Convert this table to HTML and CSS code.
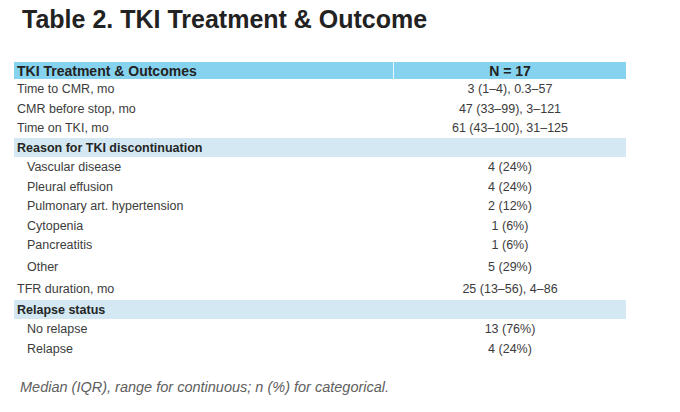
FILE: index.html
```html
<!DOCTYPE html>
<html>
<head>
<meta charset="utf-8">
<link rel="stylesheet" href="styles.css">
</head>
<body>
<h1 class="title">Table 2. TKI Treatment &amp; Outcome</h1>
<div class="tbl">
  <div class="row head"><div class="label">TKI Treatment &amp; Outcomes</div><div class="value">N = 17</div></div>
  <div class="row"><div class="label">Time to CMR, mo</div><div class="value">3 (1–4), 0.3–57</div></div>
  <div class="row"><div class="label">CMR before stop, mo</div><div class="value">47 (33–99), 3–121</div></div>
  <div class="row"><div class="label">Time on TKI, mo</div><div class="value">61 (43–100), 31–125</div></div>
  <div class="row section"><div class="label">Reason for TKI discontinuation</div><div class="value"></div></div>
  <div class="row sub"><div class="label">Vascular disease</div><div class="value">4 (24%)</div></div>
  <div class="row sub"><div class="label">Pleural effusion</div><div class="value">4 (24%)</div></div>
  <div class="row sub"><div class="label">Pulmonary art. hypertension</div><div class="value">2 (12%)</div></div>
  <div class="row sub"><div class="label">Cytopenia</div><div class="value">1 (6%)</div></div>
  <div class="row sub"><div class="label">Pancreatitis</div><div class="value">1 (6%)</div></div>
  <div class="row sub tall"><div class="label">Other</div><div class="value">5 (29%)</div></div>
  <div class="row mid"><div class="label">TFR duration, mo</div><div class="value">25 (13–56), 4–86</div></div>
  <div class="row section"><div class="label">Relapse status</div><div class="value"></div></div>
  <div class="row sub"><div class="label">No relapse</div><div class="value">13 (76%)</div></div>
  <div class="row sub"><div class="label">Relapse</div><div class="value">4 (24%)</div></div>
</div>
<p class="note">Median (IQR), range for continuous; n (%) for categorical.</p>
</body>
</html>
```
FILE: styles.css
```css
html, body {
  margin: 0;
  padding: 0;
  background: #ffffff;
}
body {
  font-family: "Liberation Sans", Arial, sans-serif;
  color: #3c3c3c;
  width: 680px;
  height: 412px;
  overflow: hidden;
}
.title {
  margin: 0;
  padding: 5px 0 0 22px;
  font-size: 25px;
  line-height: 29px;
  font-weight: bold;
  color: #222222;
}
.tbl {
  margin: 28px 0 0 14px;
  width: 612px;
  display: flex;
  flex-direction: column;
}
.row {
  display: flex;
  align-items: stretch;
  height: 19.6px;
  font-size: 12.5px;
  line-height: 15px;
}
.label {
  width: 380px;
  box-sizing: border-box;
  padding: 2px 0 0 3px;
  display: flex;
  align-items: center;
}
.value {
  width: 232px;
  box-sizing: border-box;
  padding-top: 2px;
  display: flex;
  align-items: center;
  justify-content: center;
}
.head {
  height: 17px;
  font-size: 14px;
  font-weight: bold;
  color: #222222;
}
.head .label,
.head .value {
  padding-top: 1px;
  background: #86d3ef;
}
.head .label {
  border-right: 1px solid #e8f6fb;
}
.section {
  height: 19px;
  font-weight: bold;
  color: #252525;
  background: #d3e8f2;
}
.sub .label {
  padding-left: 13px;
}
.tall {
  height: 23px;
}
.mid {
  height: 22px;
}
.note {
  margin: 21px 0 0 20px;
  font-size: 14.5px;
  line-height: 17px;
  font-style: italic;
  color: #606060;
}
```
